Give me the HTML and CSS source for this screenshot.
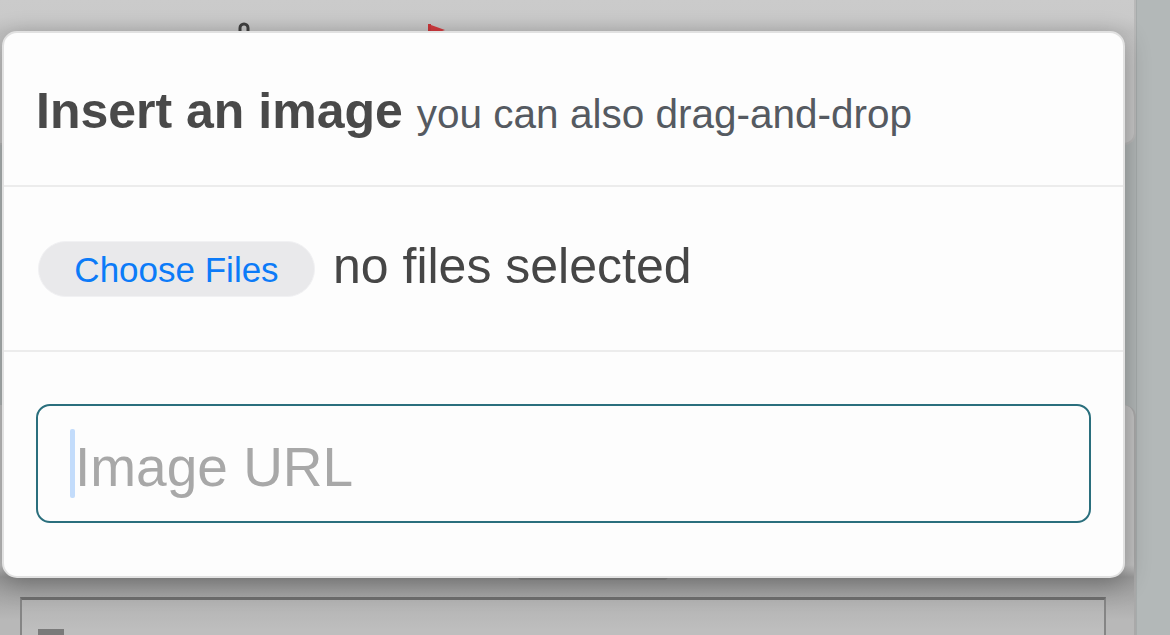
FILE: index.html
```html
<!DOCTYPE html>
<html lang="en">
<head>
<meta charset="utf-8">
<title>Insert an image</title>
<link rel="stylesheet" href="styles.css">
</head>
<body>
<div class="page">
  <div class="main">
    <div class="toolbar-card">
      <div class="toolbar">
        <svg class="tool-arch" width="12" height="16" viewBox="0 0 12 16"><path d="M2 16V6a4 4 0 0 1 8 0v10" fill="none" stroke="#3f3f3f" stroke-width="3"/></svg>
        <svg class="tool-flag" width="18" height="16" viewBox="0 0 18 16"><rect x="0" y="0" width="3" height="16" fill="#c9363a"/><path d="M3 1l14 5-14 5z" fill="#d13a3e"/></svg>
      </div>
    </div>
    <div class="editor-card">
      <div class="handle"></div>
      <div class="text-box"><span class="box-mark"></span></div>
    </div>
  </div>
  <div class="sidebar"></div>
</div>

<div class="modal">
  <div class="modal-header">
    <h1 class="title">Insert an image</h1>
    <span class="subtitle">you can also drag-and-drop</span>
  </div>
  <div class="modal-row file-row">
    <span class="file-button">Choose Files</span>
    <span class="file-status">no files selected</span>
  </div>
  <div class="modal-row url-row">
    <div class="url-input">
      <span class="caret"></span>
      <span class="placeholder">Image URL</span>
    </div>
  </div>
</div>
</body>
</html>
```

FILE: styles.css
```css
* { box-sizing: border-box; }
html, body {
  margin: 0;
  padding: 0;
}
body {
  width: 1170px;
  height: 635px;
  overflow: hidden;
  position: relative;
  background: #b1b6b6;
  font-family: "Liberation Sans", Arial, sans-serif;
}

.page {
  display: flex;
  height: 635px;
}
.main {
  width: 1136px;
  display: flex;
  flex-direction: column;
  gap: 260px;
  background: #b1b6b6;
}
.sidebar {
  flex: 1;
  background: #b3b8b8;
  border-left: 1px solid #a6abab;
}

.toolbar-card {
  height: 148px;
  background: linear-gradient(#cbcbcb 0, #cacaca 18px, #c2c2c2 32px, #c6c6c6 60px);
  border-right: 2px solid #b9b9b9;
  border-bottom: 2px solid #b9b9b9;
  border-radius: 0 0 12px 0;
}
.toolbar {
  display: flex;
  align-items: flex-start;
  padding: 22px 0 0 238px;
  gap: 178px;
}
.tool-flag { margin-top: 2px; }

.editor-card {
  flex: 1;
  background: linear-gradient(#c3c3c3 0, #c3c3c3 160px, #9a9a9a 172px, #a6a6a6 190px, #b8b8b8 215px);
  border-right: 2px solid #a9a9a9;
  border-radius: 0 12px 0 0;
  padding-top: 169px;
  display: flex;
  flex-direction: column;
}
.handle {
  width: 150px;
  height: 6px;
  margin-left: 518px;
  background: #8d8d8d;
  border-radius: 0 0 4px 4px;
}
.text-box {
  margin: 17px 0 0 20px;
  width: 1086px;
  flex: 1;
  border: 2px solid #858585;
  border-top: 3px solid #6e6e6e;
  border-bottom: none;
  background: linear-gradient(#b3b3b3, #bebebe 30px);
  padding: 29px 0 0 16px;
}
.box-mark {
  display: block;
  width: 26px;
  height: 6px;
  background: #7a7a7a;
}

/* Modal */
.modal {
  position: absolute;
  left: 2px;
  top: 31px;
  width: 1123px;
  height: 547px;
  background: #fdfdfd;
  border: 2px solid #e1e1e1;
  border-radius: 15px;
  box-shadow: 0 6px 26px rgba(0, 0, 0, 0.3);
  display: flex;
  flex-direction: column;
}
.modal-header {
  height: 154px;
  display: flex;
  align-items: baseline;
  padding: 50px 0 0 32px;
  border-bottom: 2px solid #ececec;
}
.title {
  margin: 0;
  font-size: 50px;
  font-weight: bold;
  color: #494949;
  line-height: 56px;
}
.subtitle {
  margin-left: 14px;
  font-size: 40.5px;
  color: #555a61;
}

.file-row {
  height: 165px;
  display: flex;
  align-items: center;
  padding-left: 34px;
  border-bottom: 2px solid #ececec;
}
.file-button {
  height: 56px;
  width: 277px;
  border-radius: 28px;
  background: #e9e9eb;
  border: 1px solid #f1f1f3;
  color: #0c7bf8;
  font-size: 35px;
  display: flex;
  align-items: center;
  justify-content: center;
  padding-top: 2px;
}
.file-status {
  margin-left: 18px;
  font-size: 50px;
  color: #464646;
  padding-bottom: 6px;
}

.url-row {
  flex: 1;
  padding: 52px 32px 0 32px;
}
.url-input {
  height: 119px;
  border: 2px solid #2a6f7d;
  border-radius: 14px;
  display: flex;
  align-items: center;
  padding-left: 32px;
}
.caret {
  width: 5px;
  height: 69px;
  background: #c3dcfb;
  border-radius: 2px;
}
.placeholder {
  margin-left: 0;
  font-size: 55px;
  color: #a8a8a8;
  padding-top: 6px;
}
```
